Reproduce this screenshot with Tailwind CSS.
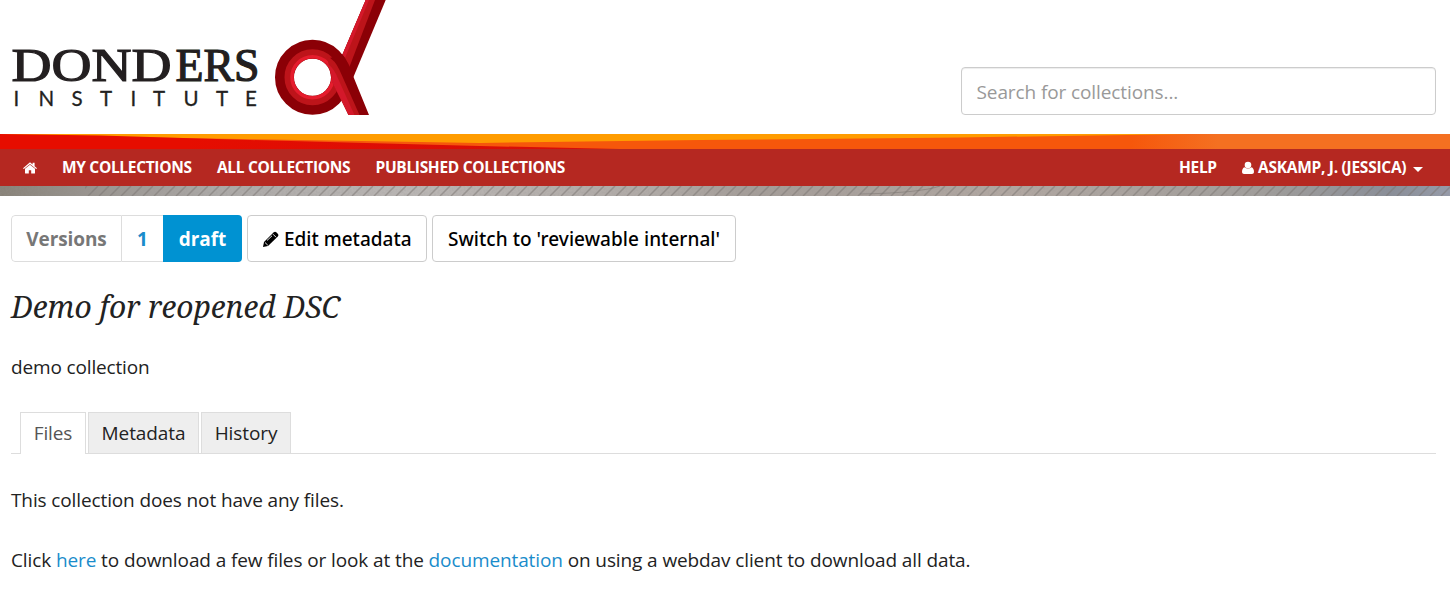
<!DOCTYPE html>
<html lang="en">
<head>
<meta charset="utf-8">
<title>Donders Repository</title>
<script src="https://cdn.jsdelivr.net/npm/@tailwindcss/browser@4"></script>
</head>
<body class="h-[600px] overflow-hidden bg-white font-['Open_Sans',sans-serif] text-[#222]">
<header class="flex h-[134px] justify-between">
  <svg width="400" height="134" viewBox="0 0 400 134" role="img" aria-label="Donders Institute">
    <g fill="#231f20" stroke="#231f20">
      <text y="81" font-family="Liberation Serif, serif" font-size="46.500" stroke-width="1.200"><tspan x="11.500" textLength="160" lengthAdjust="spacingAndGlyphs">DOND</tspan><tspan x="175.500" textLength="84" lengthAdjust="spacingAndGlyphs">ERS</tspan></text>
      <text y="106" x="13.500 38.500 71.500 100 130.500 153 183.500 216 245" font-family="Lato, sans-serif" font-size="20.500" stroke-width=".3">INSTITUTE</text>
    </g>
    <path d="M365.700 0H385.700L353 78L341 58Z" fill="#8b0006"/>
    <path d="M365.700 0H375L349 68L341 58Z" fill="#bd141a"/>
    <path d="M365.700 0H369L345 58L341 58Z" fill="#d4182a"/>
    <circle cx="312.500" cy="77.300" r="28" fill="none" stroke="#8b0006" stroke-width="19"/>
    <circle cx="312.500" cy="77.300" r="23.500" fill="none" stroke="#bd141a" stroke-width="9"/>
    <circle cx="312.500" cy="77.300" r="20.500" fill="none" stroke="#e51c2d" stroke-width="3.500"/>
    <path d="M330 58L342 54Q349 62 353.500 77L369 115H348.500L332 81Z" fill="#8b0006"/>
    <path d="M327 56Q335 60 339.500 70L359.500 115H348.500L331 77Z" fill="#bd141a"/>
    <path d="M325 62Q332 66 336 74L354.500 115H348.500L332 82Q331.500 68 325 62Z" fill="#d4182a"/>
  </svg>
  <div class="mt-[67px] mr-[14px] flex h-12 w-[475px] items-center rounded border border-[#ccc] px-[14.500px] pt-[2px] text-[19px] tracking-[-0.1px] text-[#999] shadow-[inset_0_1px_1px_rgba(0,0,0,0.075)]">Search for collections...</div>
</header>
<svg class="block" width="1450" height="15" viewBox="0 0 1450 15">
  <defs>
    <linearGradient id="band"><stop offset=".78" stop-color="#f6570b"/><stop offset=".84" stop-color="#f47021"/></linearGradient>
    <linearGradient id="red"><stop offset=".3" stop-color="#e60d00"/><stop offset="1" stop-color="#d30e0a"/></linearGradient>
  </defs>
  <path d="M0 0H1450V15H0Z" fill="url(#band)"/>
  <path d="M0 0H1190L960 3.500L700 6L480 9L0 1Z" fill="#ff9c00"/>
  <path d="M0 0L100 1.500L250 6L480 12L620 15H0Z" fill="url(#red)"/>
</svg>
<nav class="flex h-[37px] items-center bg-[#b52821] pl-[23px] text-[15.500px] font-bold tracking-[-0.320px] whitespace-nowrap text-white">
  <svg class="mr-[25px] w-[14px]" height="14" viewBox="0 0 14 14" fill="currentColor"><path d="M7 3.700L12 7.800V12a.6.600 0 0 1-.6.600H8.200V9.200H5.800v3.400H2.600A.6.600 0 0 1 2 12V7.800Z"/><path d="M7 1.200l2.600 2.200V1.800h2v3.400L14 7.200l-.8.900L7 3 .8 8.100 0 7.200Z"/></svg>
  <a class="w-[155px]">MY COLLECTIONS</a>
  <a class="w-[158.500px]">ALL COLLECTIONS</a>
  <a>PUBLISHED COLLECTIONS</a>
  <a class="ml-auto w-[63px]">HELP</a>
  <svg class="w-[12px]" height="14" viewBox="0 0 12 14" fill="currentColor"><circle cx="6" cy="4" r="3.300"/><path d="M2.600 6.200Q6 9 9.400 6.200Q12 7 12 11.200Q11.800 13 10 13H2Q.2 13 0 11.200Q0 7 2.600 6.200Z"/></svg>
  <a class="ml-[4px] w-[155px] tracking-[-0.270px]">ASKAMP, J. (JESSICA)</a>
  <svg class="mt-[3px] mr-[27px]" width="10" height="5" viewBox="0 0 10 5" fill="currentColor"><path d="M0 0H10L5 5Z"/></svg>
</nav>
<svg class="block" width="1450" height="10" viewBox="0 0 1450 10">
  <defs>
    <linearGradient id="stone"><stop stop-color="#888278"/><stop offset=".06" stop-color="#98938e"/><stop offset=".15" stop-color="#aca9a7"/><stop offset=".28" stop-color="#bab6b4"/><stop offset=".45" stop-color="#b0aaa6"/><stop offset=".52" stop-color="#a49d98"/><stop offset=".7" stop-color="#b1a7a1"/><stop offset=".87" stop-color="#a19e9b"/><stop offset=".96" stop-color="#898e98"/><stop offset="1" stop-color="#969baa"/></linearGradient>
    <pattern id="hatch" width="11" height="10" patternUnits="userSpaceOnUse"><path d="M0 10L10 0M-11 10L-1 0M11 10L21 0" stroke="#77716e" stroke-opacity=".5" stroke-width="1.500"/></pattern>
    <filter id="grain" x="0" y="0" width="100%" height="100%"><feTurbulence type="fractalNoise" baseFrequency=".5" numOctaves="2"/><feColorMatrix values="0 0 0 0 .3 0 0 0 0 .3 0 0 0 0 .3 .5 0 0 0 -.18"/></filter>
  </defs>
  <path d="M0 0H1450V10H0Z" fill="url(#stone)"/>
  <path d="M85 0H1450V10H85Z" fill="url(#hatch)"/>
  <rect width="1450" height="10" filter="url(#grain)"/>
  <path d="M860 8Q920 7 940 0" fill="none" stroke="#77716e" stroke-opacity=".5"/>
</svg>
<main class="pr-[14px] pl-[11px]">
  <div class="mt-[19px] flex h-[47px] text-[19px] whitespace-nowrap">
    <div class="flex w-[231px] overflow-hidden rounded font-bold">
      <span class="flex w-[111px] items-center justify-center rounded-l border border-[#ddd] pt-[2px] tracking-[-0.100px] text-[#777]">Versions</span>
      <span class="flex w-[41px] items-center justify-center border-y border-[#ddd] pt-[2px] text-[#1a8ccb]">1</span>
      <span class="flex w-[79px] items-center justify-center bg-[#0092d2] pt-[2px] text-white">draft</span>
    </div>
    <div class="ml-[5px] flex w-[180px] items-center rounded border border-[#ccc] pt-[2px] pl-[15px] font-['Noto_Sans'] font-medium text-black">
      <svg class="mt-[-2px] mr-[5px]" width="16" height="16" viewBox="0 0 16 16"><path d="M0 16L1 11L10.500 1.500Q12 0 13.300 1.200L15 3Q16 4.200 14.800 5.400L5 15Z"/><path d="M10 3.200L13 6.200M2 11.500L4.800 14.200M4 9.500L9 4.800" fill="none" stroke="white" stroke-width=".9"/></svg>
      <span>Edit metadata</span>
    </div>
    <div class="ml-[5px] flex w-[304px] items-center justify-center rounded border border-[#ccc] pt-[2px] font-['Noto_Sans'] font-medium tracking-[0.050px] text-black">Switch to 'reviewable internal'</div>
  </div>
  <h1 class="mt-[25px] h-10 font-['Noto_Serif','Droid_Serif','Liberation_Serif',serif] text-[30px] leading-10 whitespace-nowrap italic">Demo for reopened DSC</h1>
  <p class="mt-[26px] text-[19px] leading-[28px] tracking-[-0.150px]">demo collection</p>
  <div class="mt-[31px] flex h-[42px] gap-[2px] border-b border-[#ddd] pl-[9px] text-[19px] tracking-[-0.100px]">
    <span class="flex h-[42px] w-[66px] items-center justify-center border border-b-0 border-[#ddd] bg-white text-[#555]">Files</span>
    <span class="flex h-[41px] w-[111px] items-center justify-center border border-b-0 border-[#ddd] bg-[#eee]">Metadata</span>
    <span class="flex h-[41px] w-[90px] items-center justify-center border border-b-0 border-[#ddd] bg-[#eee]">History</span>
  </div>
  <p class="mt-[32px] text-[19px] leading-[28px] tracking-[-0.120px]">This collection does not have any files.</p>
  <p class="mt-[32px] text-[19px] leading-[28px] tracking-[-0.110px] whitespace-nowrap">Click <a class="text-[#1a8ccb]">here</a> to download a few files or look at the <a class="text-[#1a8ccb]">documentation</a> on using a webdav client to download all data.</p>
</main>
</body>
</html>
